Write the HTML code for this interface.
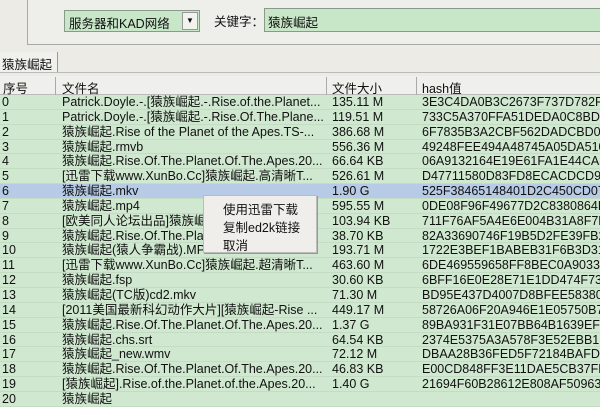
<!DOCTYPE html>
<html><head><meta charset="utf-8"><style>
*{margin:0;padding:0;box-sizing:border-box}
body{width:600px;height:400px;overflow:hidden;background:#ecebe6;font-family:"Liberation Sans","Noto Sans CJK SC",sans-serif;font-size:12.5px;color:#111;position:relative}
.panel{position:absolute;left:27px;top:-2px;width:600px;height:47px;border:1px solid #a8a8a8;background:#eeeeea}
.combo{position:absolute;left:64px;top:10px;width:136px;height:22px;border:1px solid #8a9a8a;background:#c8e6c8;padding:2px 4px}
.combo .btn{position:absolute;right:1px;top:1px;width:16px;height:18px;background:#f2f2ee;border:1px solid #999;font-size:8px;text-align:center;line-height:16px}
.lbl{position:absolute;left:214px;top:11px}
.inp{position:absolute;left:264px;top:8px;width:340px;height:24px;border:1px solid #8a9a8a;background:#c8e6c8;padding:3px 3px}
.tab{position:absolute;left:0;top:52px;width:58px;height:20px;border-right:1px solid #999;background:#f0f0ec;padding:2px 2px}
.tabline{position:absolute;left:0;top:72px;width:600px;height:1px;background:#bbb}
.hdr{position:absolute;left:0;top:76px;width:600px;height:19px;background:#efefeb;border-bottom:1px solid #bbb}
.hdr div{position:absolute;top:2px}
.hsep{position:absolute;top:77px;width:1px;height:18px;background:#aaa}
.rows{position:absolute;left:0;top:95px;width:600px;background:#cfe8cf}
.r{height:14.85px;line-height:14.85px;position:relative;white-space:nowrap;border-bottom:1px solid #c4dcc4}
.r span{position:absolute;top:0}
.c0{left:2px}.c1{left:62px}.c2{left:332px}.c3{left:422px}
.sel{background:#b7cbe6}
.menu{position:absolute;left:203px;top:195px;width:114px;height:58px;background:#efeeeb;border:1px solid #bbb;box-shadow:1px 1px 0 #999}
.menu div{position:absolute;left:19px}
</style></head><body>
<div class="panel"></div>
<div class="combo">服务器和KAD网络<div class="btn">▼</div></div>
<div class="lbl">关键字：</div>
<div class="inp">猿族崛起</div>
<div class="tab">猿族崛起</div>
<div class="tabline"></div>
<div class="hdr"><div style="left:3px">序号</div><div style="left:62px">文件名</div><div style="left:332px">文件大小</div><div style="left:422px">hash值</div></div>
<div class="hsep" style="left:55px"></div><div class="hsep" style="left:326px"></div><div class="hsep" style="left:416px"></div>
<div class="rows">
<div class="r"><span class="c0">0</span><span class="c1">Patrick.Doyle.-.[猿族崛起.-.Rise.of.the.Planet...</span><span class="c2">135.11 M</span><span class="c3">3E3C4DA0B3C2673F737D782F6F</span></div>
<div class="r"><span class="c0">1</span><span class="c1">Patrick.Doyle.-.[猿族崛起.-.Rise.Of.The.Plane...</span><span class="c2">119.51 M</span><span class="c3">733C5A370FFA51DEDA0C8BD3C</span></div>
<div class="r"><span class="c0">2</span><span class="c1">猿族崛起.Rise of the Planet of the Apes.TS-...</span><span class="c2">386.68 M</span><span class="c3">6F7835B3A2CBF562DADCBD04D</span></div>
<div class="r"><span class="c0">3</span><span class="c1">猿族崛起.rmvb</span><span class="c2">556.36 M</span><span class="c3">49248FEE494A48745A05DA510</span></div>
<div class="r"><span class="c0">4</span><span class="c1">猿族崛起.Rise.Of.The.Planet.Of.The.Apes.20...</span><span class="c2">66.64 KB</span><span class="c3">06A9132164E19E61FA1E44CA3</span></div>
<div class="r"><span class="c0">5</span><span class="c1">[迅雷下载www.XunBo.Cc]猿族崛起.高清晰T...</span><span class="c2">526.61 M</span><span class="c3">D47711580D83FD8ECACDCD9E</span></div>
<div class="r sel"><span class="c0">6</span><span class="c1">猿族崛起.mkv</span><span class="c2">1.90 G</span><span class="c3">525F38465148401D2C450CD07</span></div>
<div class="r"><span class="c0">7</span><span class="c1">猿族崛起.mp4</span><span class="c2">595.55 M</span><span class="c3">0DE08F96F49677D2C8380864B0</span></div>
<div class="r"><span class="c0">8</span><span class="c1">[欧美同人论坛出品]猿族崛起</span><span class="c2">103.94 KB</span><span class="c3">711F76AF5A4E6E004B31A8F7B</span></div>
<div class="r"><span class="c0">9</span><span class="c1">猿族崛起.Rise.Of.The.Plan</span><span class="c2">38.70 KB</span><span class="c3">82A33690746F19B5D2FE39FB2</span></div>
<div class="r"><span class="c0">10</span><span class="c1">猿族崛起(猿人争霸战).MP4</span><span class="c2">193.71 M</span><span class="c3">1722E3BEF1BABEB31F6B3D314</span></div>
<div class="r"><span class="c0">11</span><span class="c1">[迅雷下载www.XunBo.Cc]猿族崛起.超清晰T...</span><span class="c2">463.60 M</span><span class="c3">6DE469559658FF8BEC0A90331</span></div>
<div class="r"><span class="c0">12</span><span class="c1">猿族崛起.fsp</span><span class="c2">30.60 KB</span><span class="c3">6BFF16E0E28E71E1DD474F73C</span></div>
<div class="r"><span class="c0">13</span><span class="c1">猿族崛起(TC版)cd2.mkv</span><span class="c2">71.30 M</span><span class="c3">BD95E437D4007D8BFEE583802</span></div>
<div class="r"><span class="c0">14</span><span class="c1">[2011美国最新科幻动作大片][猿族崛起-Rise ...</span><span class="c2">449.17 M</span><span class="c3">58726A06F20A946E1E05750B7</span></div>
<div class="r"><span class="c0">15</span><span class="c1">猿族崛起.Rise.Of.The.Planet.Of.The.Apes.20...</span><span class="c2">1.37 G</span><span class="c3">89BA931F31E07BB64B1639EFDA</span></div>
<div class="r"><span class="c0">16</span><span class="c1">猿族崛起.chs.srt</span><span class="c2">64.54 KB</span><span class="c3">2374E5375A3A578F3E52EBB1D</span></div>
<div class="r"><span class="c0">17</span><span class="c1">猿族崛起_new.wmv</span><span class="c2">72.12 M</span><span class="c3">DBAA28B36FED5F72184BAFD19</span></div>
<div class="r"><span class="c0">18</span><span class="c1">猿族崛起.Rise.Of.The.Planet.Of.The.Apes.20...</span><span class="c2">46.83 KB</span><span class="c3">E00CD848FF3E11DAE5CB37FE47</span></div>
<div class="r"><span class="c0">19</span><span class="c1">[猿族崛起].Rise.of.the.Planet.of.the.Apes.20...</span><span class="c2">1.40 G</span><span class="c3">21694F60B28612E808AF509637</span></div>
<div class="r"><span class="c0">20</span><span class="c1">猿族崛起</span><span class="c2"></span><span class="c3"></span></div>
</div>
<div class="menu"><div style="top:3px">使用迅雷下载</div><div style="top:21px">复制ed2k链接</div><div style="top:39px">取消</div></div>
</body></html>
